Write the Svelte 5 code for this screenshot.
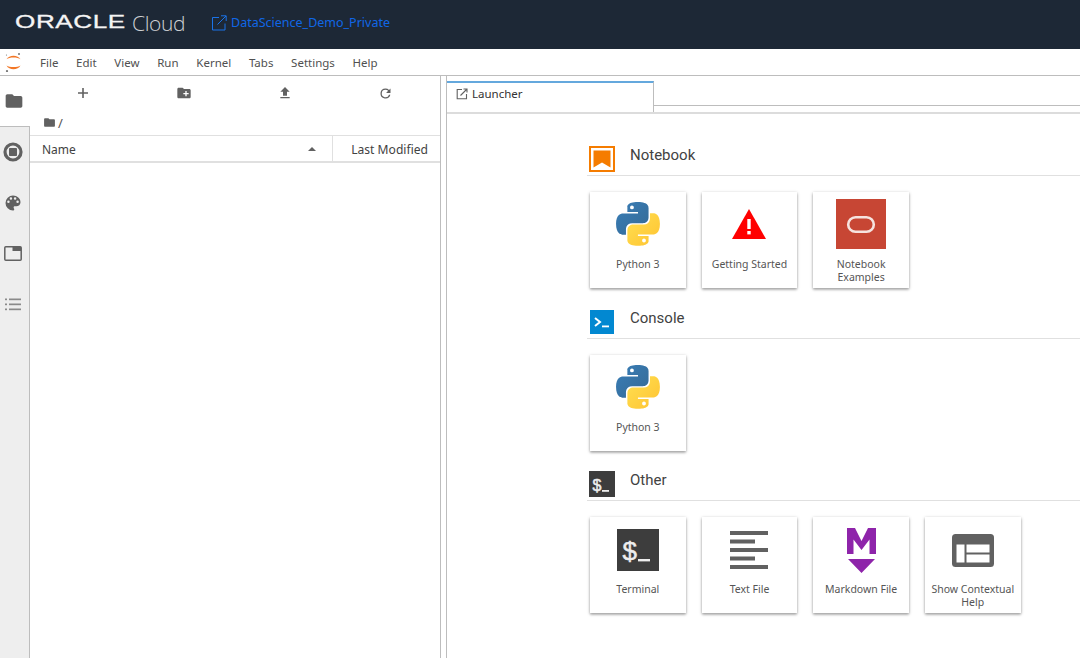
<script>
  const menus = ['File', 'Edit', 'View', 'Run', 'Kernel', 'Tabs', 'Settings', 'Help'];

  const sections = [
    { title: 'Notebook', kind: 'notebook', cards: [
      { label: ['Python 3'], icon: 'python' },
      { label: ['Getting Started'], icon: 'warning' },
      { label: ['Notebook', 'Examples'], icon: 'oracle' },
    ] },
    { title: 'Console', kind: 'console', cards: [
      { label: ['Python 3'], icon: 'python' },
    ] },
    { title: 'Other', kind: 'other', cards: [
      { label: ['Terminal'], icon: 'terminal' },
      { label: ['Text File'], icon: 'text' },
      { label: ['Markdown File'], icon: 'markdown' },
      { label: ['Show Contextual', 'Help'], icon: 'help' },
    ] },
  ];
</script>

{#snippet python(id)}
  <svg class="icon-python" viewBox="0 0 256 255" width="44" height="44">
    <defs>
      <linearGradient id="{id}a" x1="0" y1="0" x2="1" y2="1">
        <stop offset="0" stop-color="#387eb8" />
        <stop offset="1" stop-color="#366994" />
      </linearGradient>
      <linearGradient id="{id}b" x1="0" y1="0" x2="1" y2="1">
        <stop offset="0" stop-color="#ffe052" />
        <stop offset="1" stop-color="#ffc331" />
      </linearGradient>
    </defs>
    <path fill="url(#{id}a)" d="M126.916.072c-64.832 0-60.784 28.115-60.784 28.115l.072 29.128h61.868v8.745H41.631S.145 61.355.145 126.77c0 65.417 36.21 63.097 36.21 63.097h21.61v-30.356s-1.165-36.21 35.632-36.21h61.362s34.475.557 34.475-33.319V33.97S194.67.072 126.916.072zM92.802 19.66a11.12 11.12 0 0 1 11.13 11.13 11.12 11.12 0 0 1-11.13 11.13 11.12 11.12 0 0 1-11.13-11.13 11.12 11.12 0 0 1 11.13-11.13z" />
    <path fill="url(#{id}b)" d="M128.757 254.126c64.832 0 60.784-28.115 60.784-28.115l-.072-29.127H127.6v-8.745h86.441s41.486 4.705 41.486-60.712c0-65.416-36.21-63.096-36.21-63.096h-21.61v30.355s1.165 36.21-35.632 36.21h-61.362s-34.475-.557-34.475 33.32v56.013s-5.235 33.897 62.518 33.897zm34.114-19.586a11.12 11.12 0 0 1-11.13-11.13 11.12 11.12 0 0 1 11.13-11.131 11.12 11.12 0 0 1 11.13 11.13 11.12 11.12 0 0 1-11.13 11.13z" />
  </svg>
{/snippet}

{#snippet folder(size)}
  <svg viewBox="0 0 24 24" width={size} height={size}>
    <path fill="#616161" d="M10 4H4c-1.1 0-2 .9-2 2v12c0 1.1.9 2 2 2h16c1.1 0 2-.9 2-2V8c0-1.1-.9-2-2-2h-8l-2-2z" />
  </svg>
{/snippet}

{#snippet cardIcon(name, key)}
  {#if name === 'python'}
    {@render python(key)}
  {:else if name === 'warning'}
    <svg viewBox="0 0 34 30" width="34" height="30">
      <path fill="#f00" d="M17 0 34 30H0z" />
      <rect x="15.3" y="10" width="3.4" height="10" fill="#fff" />
      <rect x="15.3" y="22" width="3.4" height="3.4" fill="#fff" />
    </svg>
  {:else if name === 'oracle'}
    <svg viewBox="0 0 50 50" width="50" height="50">
      <rect width="50" height="50" fill="#c74634" />
      <rect x="12.2" y="18.2" width="25.6" height="14.6" rx="7.3" fill="none" stroke="#f6e3df" stroke-width="2.6" />
    </svg>
  {:else if name === 'terminal'}
    <svg viewBox="0 0 42 42" width="42" height="42">
      <rect width="42" height="42" fill="#3d3d3d" />
      <text x="5.500" y="31" class="term-glyph">$</text>
      <rect x="21" y="30" width="12" height="2.400" fill="#eee" />
    </svg>
  {:else if name === 'text'}
    <svg viewBox="0 0 38 38" width="38" height="38">
      <g fill="#616161">
        <rect y="0" width="38" height="4" />
        <rect y="8.5" width="25" height="4" />
        <rect y="17" width="38" height="4" />
        <rect y="25.5" width="25" height="4" />
        <rect y="34" width="38" height="4" />
      </g>
    </svg>
  {:else if name === 'markdown'}
    <svg viewBox="0 0 29 45" width="29" height="45">
      <path fill="#8e24aa" d="M0 26V0h8l6.500 13L21 0h8v26h-6.500V11.500L14.500 22 6.500 11.500V26zM1 31h27L14.500 45z" />
    </svg>
  {:else if name === 'help'}
    <svg viewBox="0 0 42 33" width="42" height="33">
      <rect width="42" height="33" rx="3.500" fill="#616161" />
      <rect x="4.500" y="10.500" width="8" height="18" fill="#fff" />
      <rect x="14.500" y="10.500" width="23" height="8" fill="#fff" />
      <rect x="14.500" y="20.500" width="23" height="8" fill="#fff" />
    </svg>
  {/if}
{/snippet}

<div class="page">
  <header class="topbar">
    <div class="brand">
      <span class="brand-oracle">ORACLE</span>
      <span class="brand-cloud">Cloud</span>
    </div>
    <a class="project" href="#top">
      <svg viewBox="0 0 16 16" width="16" height="16" fill="none" stroke="#1a73e8" stroke-width="1">
        <path d="M8 2.500H1.500v12.500h12.500V8.500" />
        <path d="M6.500 9.500 15 1M10 .8h5.200V6" />
      </svg>
      <span>DataScience_Demo_Private</span>
    </a>
  </header>

  <nav class="menubar">
    <svg class="jupyter" viewBox="0 0 17 20" width="17" height="20">
      <path fill="#f37726" d="M1.500 7.200C4 2.500 13 2.500 15.500 7.200 12.500 5 4.500 5 1.500 7.200zM1.500 13.500C4.500 15.500 12.500 15.500 15.500 13.500 13 18.500 4 18.500 1.500 13.500z" />
      <circle cx="14" cy="2" r="1" fill="#757575" />
      <circle cx="2" cy="19" r="1.100" fill="#757575" />
      <circle cx="1.500" cy="3" r="0.600" fill="#757575" />
    </svg>
    <div class="menus">
      {#each menus as item}
        <span>{item}</span>
      {/each}
    </div>
  </nav>

  <div class="workspace">
    <aside class="sidebar">
      <div class="side-tab active">{@render folder(20)}</div>
      <div class="side-tab">
        <svg viewBox="0 0 20 20" width="20" height="20">
          <circle cx="10" cy="10" r="8" fill="none" stroke="#616161" stroke-width="3.200" />
          <rect x="6" y="6" width="8" height="8" rx="0.800" fill="#616161" />
        </svg>
      </div>
      <div class="side-tab">
        <svg viewBox="0 0 24 24" width="20" height="20">
          <path fill="#616161" d="M12 3a9 9 0 0 0 0 18c.83 0 1.500-.67 1.500-1.500 0-.39-.15-.74-.39-1.010-.23-.26-.38-.61-.38-.99 0-.83.67-1.500 1.500-1.500H16c2.760 0 5-2.240 5-5 0-4.420-4.030-8-9-8zm-5.500 9a1.500 1.500 0 1 1 0-3 1.500 1.500 0 0 1 0 3zm3-4a1.500 1.500 0 1 1 0-3 1.500 1.500 0 0 1 0 3zm5 0a1.500 1.500 0 1 1 0-3 1.500 1.500 0 0 1 0 3zm3 4a1.500 1.500 0 1 1 0-3 1.500 1.500 0 0 1 0 3z" />
        </svg>
      </div>
      <div class="side-tab">
        <svg viewBox="0 0 18 15" width="18" height="15">
          <rect x="0.800" y="0.800" width="16.400" height="13.400" rx="1" fill="none" stroke="#616161" stroke-width="1.500" />
          <rect x="8.500" y="1" width="8.500" height="4" fill="#616161" />
        </svg>
      </div>
      <div class="side-tab">
        <svg viewBox="0 0 16 13" width="16" height="13">
          <g fill="#8a8a8a">
            <rect x="0" y="0.500" width="2" height="1.700" />
            <rect x="4" y="0.500" width="12" height="1.700" />
            <rect x="0" y="5.500" width="2" height="1.700" />
            <rect x="4" y="5.500" width="12" height="1.700" />
            <rect x="0" y="10.500" width="2" height="1.700" />
            <rect x="4" y="10.500" width="12" height="1.700" />
          </g>
        </svg>
      </div>
    </aside>

    <section class="files">
      <div class="file-tools">
        <button type="button" aria-label="New launcher">
          <svg viewBox="0 0 12 12" width="12" height="12"><path fill="#616161" d="M5.200 1h1.600v4.200H11v1.600H6.800V11H5.200V6.800H1V5.200h4.200z" /></svg>
        </button>
        <button type="button" aria-label="New folder">
          <svg viewBox="0 0 24 24" width="16" height="16"><path fill="#616161" d="M20 6h-8l-2-2H4c-1.110 0-2 .89-2 2v12c0 1.110.89 2 2 2h16c1.110 0 2-.89 2-2V8c0-1.110-.89-2-2-2zm-1 8h-3v3h-2v-3h-3v-2h3V9h2v3h3v2z" /></svg>
        </button>
        <button type="button" aria-label="Upload">
          <svg viewBox="0 0 24 24" width="16" height="16"><path fill="#616161" d="M9 16h6v-6h4l-7-7-7 7h4zm-4 2h14v2H5z" /></svg>
        </button>
        <button type="button" aria-label="Refresh">
          <svg viewBox="0 0 24 24" width="15" height="15"><path fill="#616161" d="M17.650 6.350A7.960 7.960 0 0 0 12 4a8 8 0 1 0 7.730 10h-2.080A6 6 0 1 1 12 6c1.660 0 3.140.69 4.220 1.780L13 11h7V4l-2.350 2.350z" /></svg>
        </button>
      </div>
      <div class="crumbs">
        {@render folder(13)}
        <span>/</span>
      </div>
      <div class="file-head">
        <div class="col-name">
          <span>Name</span>
          <svg viewBox="0 0 8 4" width="8" height="4"><path fill="#616161" d="M0 4 4 0l4 4z" /></svg>
        </div>
        <div class="col-modified">Last Modified</div>
      </div>
    </section>

    <main class="main">
      <div class="tabbar">
        <div class="tab">
          <svg viewBox="0 0 12 12" width="12" height="12" fill="none" stroke="#616161" stroke-width="1.100">
            <path d="M6 1.500H1.200v9.300h9.300V6" />
            <path d="M4.500 7.500 11 1M7.500 1H11v3.500" />
          </svg>
          <span>Launcher</span>
        </div>
      </div>
      <div class="launcher">
        {#each sections as section, s}
          <section class="group">
            <div class="group-head">
              {#if section.kind === 'notebook'}
                <svg class="kind" viewBox="0 0 26 26" width="26" height="26">
                  <rect x="1" y="1" width="24" height="24" fill="none" stroke="#f57c00" stroke-width="2" />
                  <path fill="#f57c00" d="M4.500 4.500h17v17L13 16.500l-8.500 5z" />
                </svg>
              {:else if section.kind === 'console'}
                <svg class="kind" viewBox="0 0 26 26" width="26" height="26">
                  <rect x="1" y="1" width="24" height="24" fill="#0288d1" />
                  <path fill="none" stroke="#fff" stroke-width="2" d="M6 9l5 4-5 4" />
                  <rect x="13" y="16.500" width="7" height="1.800" fill="#fff" />
                </svg>
              {:else}
                <svg class="kind" viewBox="0 0 26 26" width="26" height="26">
                  <rect width="26" height="26" fill="#3d3d3d" />
                  <text x="3.500" y="19.500" class="term-glyph small">$</text>
                  <rect x="13" y="19" width="7" height="1.800" fill="#eee" />
                </svg>
              {/if}
              <h2>{section.title}</h2>
            </div>
            <div class="cards">
              {#each section.cards as card, c}
                <div class="card">
                  <div class="card-icon">{@render cardIcon(card.icon, `py${s}${c}`)}</div>
                  <div class="card-label">
                    {#each card.label as line}
                      <div>{line}</div>
                    {/each}
                  </div>
                </div>
              {/each}
            </div>
          </section>
        {/each}
      </div>
    </main>
  </div>
</div>

<style>
  :global(body) {
    margin: 0;
    overflow: hidden;
    background: #fff;
  }

  .page {
    width: 1080px;
    height: 658px;
    display: flex;
    flex-direction: column;
    overflow: hidden;
    font-family: 'Noto Sans', 'Open Sans', sans-serif;
    color: #424242;
  }

  .topbar {
    height: 49px;
    flex: none;
    box-sizing: border-box;
    padding: 0 0 4px 15px;
    background: #1d2836;
    display: flex;
    align-items: center;
  }

  .brand {
    width: 196px;
    display: flex;
    align-items: center;
  }

  .brand-oracle {
    display: inline-block;
    width: 117px;
    font-family: 'Liberation Sans', sans-serif;
    font-size: 18px;
    letter-spacing: 0.4px;
    transform: scaleX(1.45);
    transform-origin: left center;
    color: #f4f4f4;
    -webkit-text-stroke: 0.3px #f4f4f4;
  }

  .brand-cloud {
    font-family: 'Open Sans', sans-serif;
    font-weight: 300;
    font-size: 21px;
    letter-spacing: -0.4px;
    color: #cfd1d4;
  }

  .project {
    display: flex;
    align-items: center;
    gap: 4px;
    color: #1067e6;
    text-decoration: none;
    font-size: 12.500px;
  }

  .menubar {
    height: 27px;
    flex: none;
    box-sizing: border-box;
    border-bottom: 1px solid #bdbdbd;
    display: flex;
    align-items: center;
    padding-left: 5px;
  }

  .jupyter {
    flex: none;
  }

  .menus {
    display: flex;
    gap: 17.700px;
    margin-left: 18px;
    font-size: 11.500px;
    color: #505050;
  }

  .workspace {
    flex: 1;
    display: flex;
    min-height: 0;
  }

  .sidebar {
    width: 30px;
    flex: none;
    box-sizing: border-box;
    background: #eee;
    border-right: 1px solid #bdbdbd;
    display: flex;
    flex-direction: column;
  }

  .side-tab {
    height: 51px;
    flex: none;
    display: flex;
    align-items: center;
    justify-content: center;
    box-sizing: border-box;
    padding: 0 3px 2px 0;
  }

  .side-tab.active {
    background: #fff;
    width: 30px;
    border-bottom: 1px solid #bdbdbd;
    padding-bottom: 0;
  }

  .files {
    width: 410px;
    flex: none;
    border-right: 1px solid #bdbdbd;
  }

  .file-tools {
    height: 34px;
    display: grid;
    grid-template-columns: repeat(4, 100.700px);
    padding-left: 3px;
  }

  .file-tools button {
    border: 0;
    padding: 0;
    background: none;
    display: flex;
    align-items: center;
    justify-content: center;
  }

  .crumbs {
    height: 25px;
    display: flex;
    align-items: center;
    gap: 2px;
    padding-left: 13px;
    font-size: 13px;
    color: #555;
  }

  .file-head {
    height: 28px;
    box-sizing: border-box;
    border-top: 1px solid #e0e0e0;
    border-bottom: 2px solid #e0e0e0;
    display: flex;
    align-items: stretch;
    font-size: 12px;
    color: #424242;
  }

  .col-name {
    width: 303px;
    box-sizing: border-box;
    padding: 1px 16px 0 12px;
    border-right: 1px solid #e0e0e0;
    display: flex;
    align-items: center;
    justify-content: space-between;
  }

  .col-modified {
    flex: 1;
    padding: 5px 12px 0 0;
    font-size: 12.100px;
    text-align: right;
  }

  .main {
    flex: 1;
    min-width: 0;
    margin-left: 5px;
    border-left: 1px solid #bdbdbd;
    display: flex;
    flex-direction: column;
  }

  .tabbar {
    height: 38px;
    flex: none;
    box-sizing: border-box;
    padding-top: 5px;
    border-bottom: 2px solid #dcdcdc;
    position: relative;
  }

  .tabbar::after {
    content: '';
    position: absolute;
    left: 207px;
    right: 0;
    top: 29px;
    border-top: 1px solid #bdbdbd;
  }

  .tab {
    width: 207px;
    height: 31px;
    box-sizing: border-box;
    border-top: 2px solid #64a8dd;
    border-right: 1px solid #bdbdbd;
    display: flex;
    align-items: flex-start;
    gap: 4px;
    padding: 3px 0 0 9px;
    font-size: 11.500px;
    line-height: 16px;
    color: #333;
    background: #fff;
  }

  .tab svg {
    margin-top: 2px;
  }

  .launcher {
    padding: 32px 0 0 140px;
    width: 800px;
  }

  .group {
    height: 162.500px;
  }

  .group-head {
    height: 29px;
    display: flex;
    align-items: flex-start;
    gap: 15px;
    border-bottom: 1px solid #e0e0e0;
    padding-left: 2px;
  }

  .kind {
    flex: none;
  }

  .group-head h2 {
    margin: 0;
    font-family: 'Roboto', sans-serif;
    font-size: 15px;
    font-weight: 400;
    line-height: 18px;
    color: #424242;
  }

  .cards {
    display: flex;
    gap: 16px;
    padding: 16px 0 0 3px;
  }

  .card {
    width: 95.670px;
    height: 96px;
    flex: none;
    background: #fff;
    box-shadow: 0 1px 3px rgba(0, 0, 0, 0.35), 0 2px 2px rgba(0, 0, 0, 0.12);
    display: flex;
    flex-direction: column;
    align-items: center;
  }

  .card-icon {
    height: 64px;
    margin-bottom: 2px;
    display: flex;
    align-items: center;
    justify-content: center;
  }

  .group:last-child .card-icon {
    height: 66px;
    margin-bottom: 0;
  }

  .card-label {
    font-size: 10.500px;
    line-height: 13px;
    text-align: center;
    color: #555;
    white-space: nowrap;
  }

  .term-glyph {
    font-family: 'Liberation Sans', sans-serif;
    font-size: 26px;
    font-weight: 400;
    fill: #eee;
    stroke: #eee;
    stroke-width: 0.500px;
  }

  .term-glyph.small {
    font-size: 16px;
  }
</style>
